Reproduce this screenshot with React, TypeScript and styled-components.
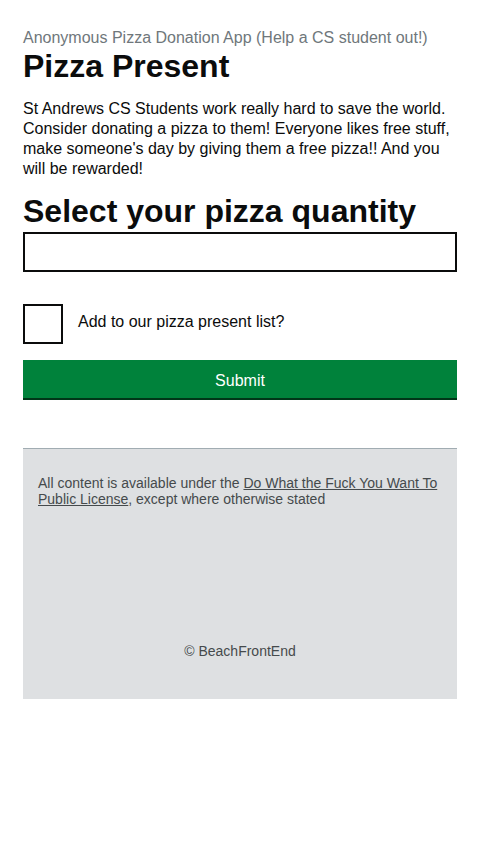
import React from "react";
import styled, { createGlobalStyle } from "styled-components";

const Global = createGlobalStyle`
  html, body { margin: 0; padding: 0; background: #ffffff; }
  body { font-family: "Liberation Sans", Arial, sans-serif; color: #0b0c0c; }
  * { box-sizing: border-box; }
`;

const Page = styled.main`
  padding: 28px 23px 0;
  display: flex;
  flex-direction: column;
`;

const Caption = styled.span`
  display: block;
  font-size: 16px;
  line-height: 20px;
  color: #6f777b;
`;

const Title = styled.h1`
  margin: 0;
  font-size: 32px;
  line-height: 36px;
  font-weight: 700;
`;

const Lead = styled.p`
  margin: 15px 0 0;
  font-size: 16px;
  line-height: 20px;
`;

const SectionHeading = styled.h2`
  margin: 14px 0 0;
  font-size: 32px;
  line-height: 36px;
  font-weight: 700;
`;

const TextInput = styled.input`
  display: block;
  width: 100%;
  height: 40px;
  margin-top: 3px;
  border: 2px solid #0b0c0c;
  border-radius: 0;
  padding: 5px;
  font-family: inherit;
  font-size: 16px;
  outline: none;
`;

const CheckRow = styled.label`
  display: flex;
  align-items: center;
  gap: 15px;
  margin-top: 32px;
  font-size: 16px;
  line-height: 20px;
  cursor: pointer;
`;

const CheckBox = styled.span`
  width: 40px;
  height: 40px;
  border: 2px solid #0b0c0c;
  background: #fff;
  flex: none;
`;

const LabelText = styled.span`
  margin-top: -4px;
`;

const SubmitButton = styled.button`
  margin-top: 16px;
  height: 38px;
  width: 100%;
  border: 0;
  border-radius: 0;
  background: #00823b;
  box-shadow: 0 2px 0 #003618;
  color: #ffffff;
  font-family: inherit;
  font-size: 16px;
  line-height: 20px;
  padding: 4px 0 0;
  cursor: pointer;
`;

const Footer = styled.footer`
  margin-top: 50px;
  border-top: 1px solid #a1acb2;
  background: #dee0e2;
  color: #454a4c;
  font-size: 14px;
  line-height: 16px;
  padding: 26px 15px 40px;
  height: 251px;
  display: flex;
  flex-direction: column;
  justify-content: space-between;
`;

const Licence = styled.p`
  margin: 0;
`;

const FooterLink = styled.a`
  color: #454a4c;
  text-decoration: underline;
`;

const Copyright = styled.p`
  margin: 0;
  text-align: center;
`;

export default function App() {
  return (
    <>
      <Global />
      <Page>
        <Caption>Anonymous Pizza Donation App (Help a CS student out!)</Caption>
        <Title>Pizza Present</Title>
        <Lead>
          St Andrews CS Students work really hard to save the world. Consider donating a pizza to
          them! Everyone likes free stuff, make someone's day by giving them a free pizza!! And you
          will be rewarded!
        </Lead>
        <SectionHeading>Select your pizza quantity</SectionHeading>
        <TextInput type="text" aria-label="Pizza quantity" />
        <CheckRow>
          <CheckBox />
          <LabelText>Add to our pizza present list?</LabelText>
        </CheckRow>
        <SubmitButton type="button">Submit</SubmitButton>
        <Footer>
          <Licence>
            All content is available under the{" "}
            <FooterLink href="#">Do What the Fuck You Want To Public License</FooterLink>, except
            where otherwise stated
          </Licence>
          <Copyright>© BeachFrontEnd</Copyright>
        </Footer>
      </Page>
    </>
  );
}
